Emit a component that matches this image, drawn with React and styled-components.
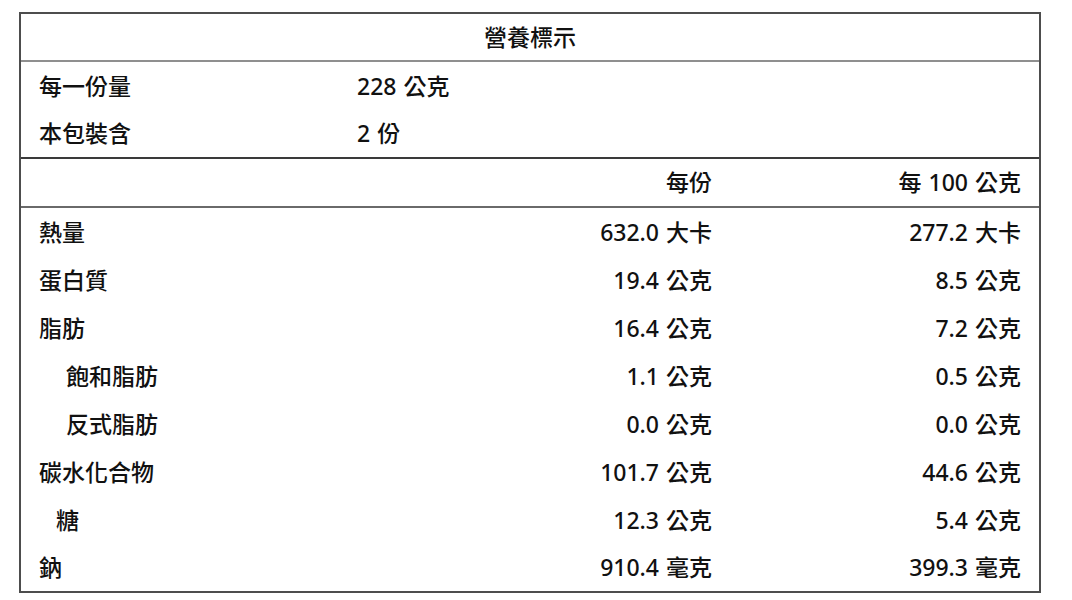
import React from "react";
import styled, { createGlobalStyle } from "styled-components";

const GlobalStyle = createGlobalStyle`
  html, body {
    margin: 0;
    padding: 0;
    background: #ffffff;
  }
  body {
    font-family: "Noto Sans", "Noto Sans CJK TC", sans-serif;
    color: #111111;
  }
`;

const Page = styled.div`
  padding: 12px 0 0 19px;
`;

const Panel = styled.div`
  width: 1022px;
  box-sizing: border-box;
  border: 2px solid #4d4d4d;
  font-size: 23px;
  font-weight: 500;
  line-height: 1;
  word-spacing: 1px;
`;

const TitleRow = styled.div`
  height: 48px;
  box-sizing: border-box;
  border-bottom: 2px solid #8f8f8f;
  display: flex;
  align-items: center;
  justify-content: center;
`;

const Section = styled.div`
  border-bottom: ${(p) => (p.$line ? `2px solid ${p.$line}` : "none")};
`;

const Row = styled.div`
  display: grid;
  grid-template-columns: 318px 391px 1fr;
  height: ${(p) => p.$h || 48}px;
  align-items: center;
`;

const Label = styled.div`
  padding-left: ${(p) => 18 + (p.$indent || 0)}px;
  white-space: nowrap;
`;

const Cell = styled.div`
  padding: 0 18px;
  text-align: ${(p) => (p.$left ? "left" : "right")};
  white-space: nowrap;
  grid-column: ${(p) => (p.$span ? "2 / span 2" : "auto")};
`;

const serving = [
  ["每一份量", "228 公克"],
  ["本包裝含", "2 份"],
];

const nutrients = [
  { name: "熱量", a: "632.0 大卡", b: "277.2 大卡" },
  { name: "蛋白質", a: "19.4 公克", b: "8.5 公克" },
  { name: "脂肪", a: "16.4 公克", b: "7.2 公克" },
  { name: "飽和脂肪", a: "1.1 公克", b: "0.5 公克", indent: 27 },
  { name: "反式脂肪", a: "0.0 公克", b: "0.0 公克", indent: 27 },
  { name: "碳水化合物", a: "101.7 公克", b: "44.6 公克" },
  { name: "糖", a: "12.3 公克", b: "5.4 公克", indent: 17 },
  { name: "鈉", a: "910.4 毫克", b: "399.3 毫克" },
];

export default function App() {
  return (
    <>
      <GlobalStyle />
      <Page>
        <Panel>
          <TitleRow>營養標示</TitleRow>
          <Section $line="#3a3a3a">
            <Row>
              <Label>{serving[0][0]}</Label>
              <Cell $left $span>{serving[0][1]}</Cell>
            </Row>
            <Row $h={47}>
              <Label>{serving[1][0]}</Label>
              <Cell $left $span>{serving[1][1]}</Cell>
            </Row>
          </Section>
          <Section $line="#6a6a6a">
            <Row $h={47}>
              <Label />
              <Cell>每份</Cell>
              <Cell>每 100 公克</Cell>
            </Row>
          </Section>
          <Section>
            {nutrients.map((n) => (
              <Row key={n.name} $h={n.name === "鈉" ? 47 : 48}>
                <Label $indent={n.indent}>{n.name}</Label>
                <Cell>{n.a}</Cell>
                <Cell>{n.b}</Cell>
              </Row>
            ))}
          </Section>
        </Panel>
      </Page>
    </>
  );
}
